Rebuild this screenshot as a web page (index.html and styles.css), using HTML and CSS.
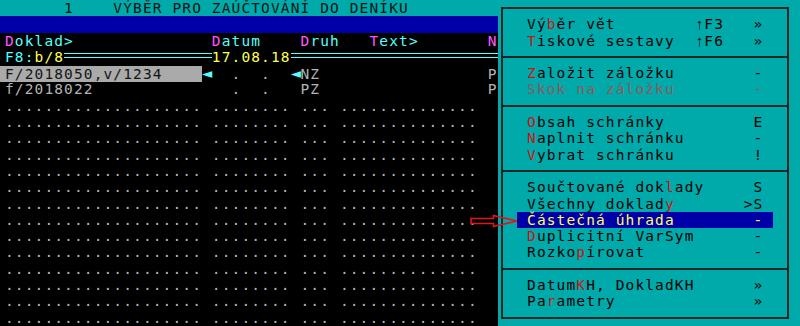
FILE: index.html
```html
<!DOCTYPE html>
<html lang="cs">
<head>
    <meta charset="UTF-8">
    <meta name="viewport" content="width=device-width, initial-scale=1.0">
    <title>Výběr pro zaúčtování do deníku</title>
    <link rel="stylesheet" href="styles.css">
</head>
<body>
    <div class="screen">
        <div class="list">
            <div class="row title">      1    VÝBĚR PRO ZAÚČTOVÁNÍ DO DENÍKU</div>
            <div class="row bar"></div>
            <div class="row head"><span class="mg">D</span>oklad&gt;              <span class="mg">D</span>atum    <span class="mg">D</span>ruh   <span class="mg">T</span>ext&gt;       <span class="mg">N</span></div>
            <div class="row filter"><span class="cy">F8:</span><span class="ye">b/8</span><span class="dbl w15"></span><span class="ye">17.08.18</span><span class="dbl w21"></span></div>
            <div class="row"><span class="sel">F/2018050,v/1234    </span><span class="tri">◄</span>  .  .  <span class="tri">◄</span>NZ                 P</div>
            <div class="row">f/2018022              .  .   PZ                 P</div>
            <div class="row">.................... ........ ... ..............</div>
            <div class="row">.................... ........ ... ..............</div>
            <div class="row">.................... ........ ... ..............</div>
            <div class="row">.................... ........ ... ..............</div>
            <div class="row">.................... ........ ... ..............</div>
            <div class="row">.................... ........ ... ..............</div>
            <div class="row">.................... ........ ... ..............</div>
            <div class="row">.................... ........ ... ..............</div>
            <div class="row">.................... ........ ... ..............</div>
            <div class="row">.................... ........ ... ..............</div>
            <div class="row">.................... ........ ... ..............</div>
            <div class="row">.................... ........ ... ..............</div>
            <div class="row">.................... ........ ... ..............</div>
            <div class="row">.................... ........ ... ..............</div>
        </div>

        <div class="side">
            <div class="menu">
                <div class="item"> Vý<span class="key">b</span>ěr vět        <span class="up">↑</span>F3   » </div>
                <div class="item"> <span class="key">T</span>iskové sestavy  <span class="up">↑</span>F6   » </div>
                <div class="sep"></div>
                <div class="item"> <span class="key">Z</span>aložit záložku        - </div>
                <div class="item off"> Skok na záložku        - </div>
                <div class="sep"></div>
                <div class="item"> <span class="key">O</span>bsah schránky         E </div>
                <div class="item"> <span class="key">N</span>aplnit schránku       - </div>
                <div class="item"> <span class="key">V</span>ybrat schránku        ! </div>
                <div class="sep"></div>
                <div class="item"> Součtované dok<span class="key">l</span>ady     S </div>
                <div class="item"> Všechny doklad<span class="key">y</span>       &gt;S </div>
                <div class="item active"> Částečná úhrada        - </div>
                <div class="item"> <span class="key">D</span>uplicitní VarSym      - </div>
                <div class="item"> Rozko<span class="key">p</span>írovat           - </div>
                <div class="sep"></div>
                <div class="item"> Datum<span class="key">K</span>H, DokladKH      » </div>
                <div class="item"> Pa<span class="key">r</span>ametry              » </div>
            </div>
        </div>

        <svg class="pointer" width="56" height="18" viewBox="466 212 56 18">
            <path d="M471 218.5 H493.5 V215.5 L517 221 L493.5 226.5 V223.5 H471 Z" fill="none" stroke="#e3141c" stroke-width="1.6"/>
        </svg>
    </div>
</body>
</html>
```

FILE: styles.css
```css
:root {
    --cw: 9.85px;
    --rh: 16.3px;
    --cyan: #00aaaa;
    --blue: #0000a8;
}
body {
    margin: 0;
    background: var(--cyan);
    font-family: "DejaVu Sans Mono", monospace;
    font-size: 14.5px;
    letter-spacing: 1.12px;
    overflow: hidden;
}
.screen {
    position: relative;
    display: flex;
    width: 800px;
    height: 326px;
}
.list {
    width: calc(var(--cw) * 50 + 5px);
    background: #000;
    color: #b4b4b4;
}
.row {
    height: var(--rh);
    line-height: var(--rh);
    padding-left: 5px;
    white-space: pre;
}
.row.title {
    background: var(--cyan);
    color: #0a1414;
    line-height: calc(var(--rh) + 1.5px);
}
.row.bar {
    background: var(--blue);
}
.row.head {
    color: #55ffff;
}
.row.filter {
    display: flex;
}
.mg {
    color: #ff55ff;
}
.cy {
    color: #55ffff;
}
.ye {
    color: #ffff55;
}
.tri {
    display: inline-block;
    width: var(--cw);
    color: #55ffff;
    font-size: 17px;
    letter-spacing: 0;
    text-align: center;
}
.sel {
    background: #aaaaaa;
    color: #141414;
    margin-left: -5px;
    padding-left: 5px;
}
.dbl {
    display: block;
    height: var(--rh);
    background: linear-gradient(to bottom,
        transparent 4.3px, #55ffff 4.3px, #55ffff 5.5px, transparent 5.5px,
        transparent 8.3px, #55ffff 8.3px, #55ffff 9.5px, transparent 9.5px);
}
.w15 {
    width: calc(var(--cw) * 15);
}
.w21 {
    width: calc(var(--cw) * 21);
}
.side {
    flex: 1;
    background: var(--cyan);
}
.menu {
    box-sizing: border-box;
    width: 287.7px;
    margin: 7.15px 0 0 3.9px;
    padding: 7.15px 0;
    border: 2px solid #0d2626;
    color: #000;
}
.item {
    width: calc(var(--cw) * 26);
    margin-left: 13.8px;
    height: var(--rh);
    line-height: var(--rh);
    white-space: pre;
}
.item .key {
    color: #c81414;
}
.item .up {
    display: inline-block;
    width: var(--cw);
    font-family: "Liberation Mono", "DejaVu Sans Mono", monospace;
    font-size: 15px;
    letter-spacing: 0;
    text-align: center;
}
.item.off {
    color: #8c5a5a;
}
.item.active {
    background: var(--blue);
    color: #ffff55;
}
.sep {
    height: var(--rh);
    background: linear-gradient(to bottom,
        transparent 7.15px, #0d2626 7.15px, #0d2626 9.15px, transparent 9.15px);
}
.pointer {
    position: absolute;
    left: 466px;
    top: 212px;
}
```
